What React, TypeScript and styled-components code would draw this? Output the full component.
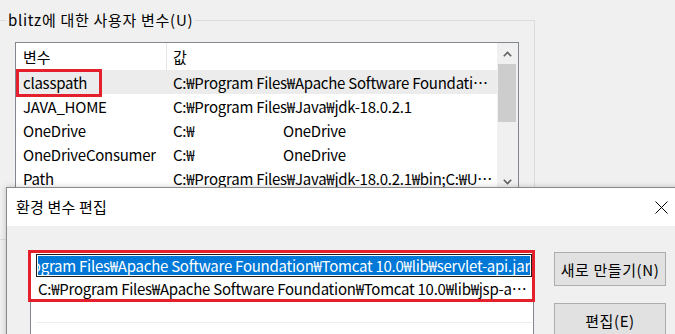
import React from "react";
import styled, { createGlobalStyle } from "styled-components";

const GlobalStyle = createGlobalStyle`
  html, body {
    margin: 0;
    padding: 0;
    background: #f0f0f0;
  }
  body {
    font-family: "Noto Sans CJK KR", "Noto Sans", sans-serif;
    font-size: 15px;
    color: #000;
  }
`;

const Screen = styled.div`
  position: relative;
  width: 675px;
  height: 334px;
  overflow: hidden;
  background: #f0f0f0;
`;

const ParentWindow = styled.div`
  padding-top: 20px;
`;

const GroupBox = styled.div`
  position: relative;
  box-sizing: border-box;
  margin-left: -10px;
  width: 545px;
  height: 220px;
  border: 1px solid #dcdcdc;
  padding: 21px 0 0 24px;
`;

const GroupTitle = styled.span`
  position: absolute;
  top: -11px;
  left: 15px;
  padding: 0 2px;
  line-height: 20px;
  background: #f0f0f0;
  white-space: nowrap;
  letter-spacing: 0.7px;
`;

const VarList = styled.div`
  box-sizing: border-box;
  width: 504px;
  height: 170px;
  border: 1px solid #828790;
  background: #fff;
  display: flex;
`;

const VarTable = styled.div`
  flex: 1;
  min-width: 0;
  display: flex;
  flex-direction: column;
`;

const HeaderRow = styled.div`
  display: grid;
  grid-template-columns: 150px 1fr;
  height: 27px;
  flex-shrink: 0;
`;

const HeaderCell = styled.div<{ $divider?: boolean }>`
  display: flex;
  align-items: center;
  padding-left: ${(p) => (p.$divider ? "6px" : "7px")};
  border-left: ${(p) => (p.$divider ? "1px solid #e5e5e5" : "none")};
`;

const VarRow = styled.div<{ $selected?: boolean }>`
  display: grid;
  grid-template-columns: 150px 1fr;
  height: 24px;
  flex-shrink: 0;
  background: ${(p) => (p.$selected ? "#ececec" : "transparent")};
`;

const Cell = styled.div`
  display: flex;
  align-items: center;
  min-width: 0;
  padding-left: 7px;
  padding-right: 4px;
  letter-spacing: -0.25px;
`;

const CellText = styled.span`
  white-space: nowrap;
  overflow: hidden;
  text-overflow: ellipsis;
`;

const MaskedPart = styled.span`
  display: inline-block;
  width: 110px;
  flex-shrink: 0;
`;

const ScrollBar = styled.div`
  width: 21px;
  flex-shrink: 0;
  background: #f0f0f0;
  display: flex;
  flex-direction: column;
`;

const ScrollArrow = styled.div`
  height: 21px;
  display: flex;
  align-items: center;
  justify-content: center;
  flex-shrink: 0;
`;

const ScrollThumb = styled.div`
  height: 58px;
  margin: 0 2px 0 1px;
  background: #cdcdcd;
`;

const ScrollSpace = styled.div`
  height: 49px;
`;

const Dialog = styled.div`
  position: absolute;
  left: 6px;
  top: 187px;
  width: 679px;
  height: 200px;
  box-sizing: border-box;
  border: 1px solid #8a8a8a;
  background: #f0f0f0;
  box-shadow: 0 0 6px rgba(0, 0, 0, 0.2);
`;

const TitleBar = styled.div`
  height: 38px;
  background: #fff;
  display: flex;
  align-items: center;
  justify-content: space-between;
  padding-left: 9px;
`;

const TitleText = styled.span`
  line-height: 20px;
  letter-spacing: 0.2px;
`;

const CloseButton = styled.div`
  width: 46px;
  height: 38px;
  display: flex;
  align-items: center;
  justify-content: center;
`;

const DialogBody = styled.div`
  display: flex;
  gap: 20px;
  padding: 25px 0 0 23px;
`;

const PathList = styled.div`
  box-sizing: border-box;
  width: 504px;
  height: 120px;
  border: 1px solid #828790;
  background: #fff;
  padding: 2px 1px 0 5px;
  letter-spacing: -0.25px;
`;

const PathRow = styled.div<{ $last?: boolean }>`
  height: 23px;
  display: flex;
  align-items: center;
  padding-left: 2px;
  border-bottom: ${(p) => (p.$last ? "1px solid #ececec" : "none")};
  box-sizing: border-box;
`;

const EditBox = styled.div`
  box-sizing: border-box;
  height: 23px;
  border: 1px solid #1e1e1e;
  padding: 1px;
  display: flex;
`;

const EditSelection = styled.div`
  flex: 1;
  min-width: 0;
  overflow: hidden;
  display: flex;
  justify-content: flex-end;
  align-items: center;
  background: #0078d7;
  color: #fff;
`;

const NoWrap = styled.span`
  white-space: nowrap;
  flex-shrink: 0;
`;

const PathText = styled.span`
  white-space: nowrap;
  overflow: hidden;
  text-overflow: ellipsis;
  padding-right: 3px;
`;

const ButtonColumn = styled.div`
  display: flex;
  flex-direction: column;
  gap: 17px;
  padding-top: 1px;
`;

const Button = styled.div`
  box-sizing: border-box;
  width: 112px;
  height: 34px;
  border: 1px solid #adadad;
  background: #e1e1e1;
  display: flex;
  align-items: center;
  justify-content: center;
  white-space: nowrap;
  letter-spacing: 0.6px;
`;

const Highlight = styled.div`
  position: absolute;
  box-sizing: border-box;
  border: 3px solid #e3202b;
  pointer-events: none;
`;

function Chevron({ up }: { up?: boolean }) {
  return (
    <svg width="9" height="6" viewBox="0 0 9 6">
      <polyline
        points={up ? "0.8,5.2 4.5,1.5 8.2,5.2" : "0.8,0.8 4.5,4.5 8.2,0.8"}
        fill="none"
        stroke="#606060"
        strokeWidth="1.6"
      />
    </svg>
  );
}

const rows = [
  {
    name: "classpath",
    value:
      "C:₩Program Files₩Apache Software Foundation₩Tomcat 10.0₩lib₩servlet-api.jar;C:₩Program Files",
    selected: true,
  },
  { name: "JAVA_HOME", value: "C:₩Program Files₩Java₩jdk-18.0.2.1" },
  { name: "OneDrive", value: "C:₩", tail: "OneDrive" },
  { name: "OneDriveConsumer", value: "C:₩", tail: "OneDrive" },
  {
    name: "Path",
    value: "C:₩Program Files₩Java₩jdk-18.0.2.1₩bin;C:₩Users₩blitz₩AppData",
  },
];

export default function App() {
  return (
    <Screen>
      <GlobalStyle />
      <ParentWindow>
        <GroupBox>
          <GroupTitle>blitz에 대한 사용자 변수(U)</GroupTitle>
          <VarList>
            <VarTable>
              <HeaderRow>
                <HeaderCell>변수</HeaderCell>
                <HeaderCell $divider>값</HeaderCell>
              </HeaderRow>
              {rows.map((r) => (
                <VarRow key={r.name} $selected={r.selected}>
                  <Cell>
                    <CellText>{r.name}</CellText>
                  </Cell>
                  <Cell>
                    {r.tail ? (
                      <>
                        <MaskedPart>{r.value}</MaskedPart>
                        <CellText>{r.tail}</CellText>
                      </>
                    ) : (
                      <CellText>{r.value}</CellText>
                    )}
                  </Cell>
                </VarRow>
              ))}
            </VarTable>
            <ScrollBar>
              <ScrollArrow>
                <Chevron up />
              </ScrollArrow>
              <ScrollThumb />
              <ScrollSpace />
              <ScrollArrow>
                <Chevron />
              </ScrollArrow>
            </ScrollBar>
          </VarList>
        </GroupBox>
      </ParentWindow>

      <Dialog>
        <TitleBar>
          <TitleText>환경 변수 편집</TitleText>
          <CloseButton>
            <svg width="13" height="13" viewBox="0 0 13 13">
              <path d="M0.5 0.5 L12.5 12.5 M12.5 0.5 L0.5 12.5" stroke="#000" strokeWidth="1" />
            </svg>
          </CloseButton>
        </TitleBar>
        <DialogBody>
          <PathList>
            <EditBox>
              <EditSelection>
                <NoWrap>C:₩Program Files₩Apache Software Foundation₩Tomcat 10.0₩lib₩servlet-api.jar</NoWrap>
              </EditSelection>
            </EditBox>
            <PathRow>
              <PathText>C:₩Program Files₩Apache Software Foundation₩Tomcat 10.0₩lib₩jsp-api.jar</PathText>
            </PathRow>
            <PathRow $last />
          </PathList>
          <ButtonColumn>
            <Button>새로 만들기(N)</Button>
            <Button>편집(E)</Button>
          </ButtonColumn>
        </DialogBody>
      </Dialog>

      <Highlight style={{ left: 16, top: 69, width: 86, height: 28 }} />
      <Highlight style={{ left: 28, top: 250, width: 507, height: 52 }} />
    </Screen>
  );
}
